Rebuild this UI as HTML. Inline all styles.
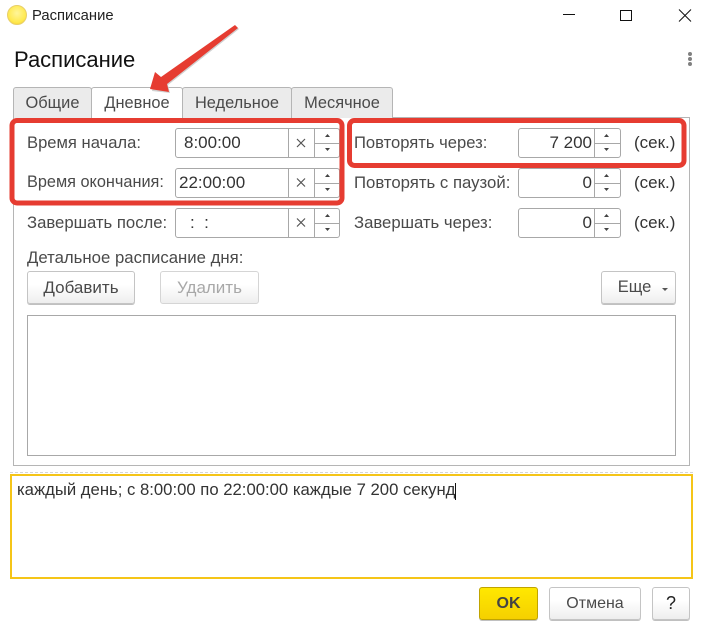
<!DOCTYPE html>
<html><head><meta charset="utf-8"><style>
html,body{margin:0;padding:0;background:#fff}
#p{position:relative;width:712px;height:632px;overflow:hidden;background:#fff;font-family:"Liberation Sans",sans-serif;color:#4a4a4a;font-size:16.6px}
#p div{position:absolute;box-sizing:border-box;white-space:nowrap}
.l{line-height:18px;height:18px}
.tab{top:87px;height:31px;background:#ebebeb;border:1px solid #b5b5b5;border-bottom:none;border-radius:3px 3px 0 0;text-align:center;line-height:31px;color:#4a4a4a;font-size:16.4px}
.f{height:30px;background:#fff;border:1px solid #a8a8a8;border-radius:3px}
.v{line-height:28px;height:28px;top:0;font-size:17px;color:#333}
.d{top:0;bottom:0;width:1px;background:#a8a8a8}
.h{height:1px;background:#a8a8a8}
.b{height:33px;border:1px solid #c4c4c4;border-radius:3px;background:linear-gradient(#fff 40%,#eeeeee);text-align:center;line-height:31px;font-size:17px;color:#4a4a4a;box-shadow:0 1px 0 #c0c0c0}
</style></head><body><div id="p">
<div style="left:7px;top:5px;width:20px;height:20px;border-radius:50%;background:radial-gradient(circle at 50% 40%,#fff59a,#ffe94d 65%,#f0c020);border:1px solid #e8cf6a"></div>
<div class="l" style="left:32px;top:7px;font-size:14.8px;color:#222">Расписание</div>
<svg style="position:absolute;left:0;top:0" width="712" height="632"><path d="M563 14.500h12M620.500 10.500h11v10h-11zM679 9.500l12 12M691 9.500l-12 12" fill="none" stroke="#111" stroke-width="1"/></svg>
<div style="left:14px;top:46px;font-size:22px;line-height:28px;color:#111">Расписание</div>
<div style="left:688px;top:52px;width:4px;height:4px;border-radius:50%;background:#808080"></div>
<div style="left:688px;top:57px;width:4px;height:4px;border-radius:50%;background:#808080"></div>
<div style="left:688px;top:62px;width:4px;height:4px;border-radius:50%;background:#808080"></div>

<div style="left:13px;top:117px;width:677px;height:349px;border:1px solid #b5b5b5"></div>
<div class="tab" style="left:13px;width:79px">Общие</div>
<div class="tab" style="left:91px;width:92px;height:32px;background:#fff;z-index:2">Дневное</div>
<div class="tab" style="left:182px;width:110px">Недельное</div>
<div class="tab" style="left:291px;width:102px">Месячное</div>

<div class="l" style="left:27px;top:134px">Время начала:</div>
<div class="l" style="left:27px;top:173px;font-size:16.3px">Время окончания:</div>
<div class="l" style="left:27px;top:214px;font-size:16.7px">Завершать после:</div>
<div class="l" style="left:354px;top:134px">Повторять через:</div>
<div class="l" style="left:354px;top:174px;font-size:16.75px">Повторять с паузой:</div>
<div class="l" style="left:354px;top:214px;font-size:16.7px">Завершать через:</div>
<div class="l" style="left:634px;top:134px;color:#333;font-size:17px">(сек.)</div>
<div class="l" style="left:634px;top:174px;color:#333;font-size:17px">(сек.)</div>
<div class="l" style="left:634px;top:214px;color:#333;font-size:17px">(сек.)</div>

<div class="f" style="left:175px;top:128px;width:165px"><div class="v" style="left:8px">8:00:00</div><div class="d" style="left:112px"></div><div class="d" style="left:138px"></div><div class="h" style="left:138px;right:0;top:14px"></div></div>
<div class="f" style="left:175px;top:168px;width:165px"><div class="v" style="left:3px">22:00:00</div><div class="d" style="left:112px"></div><div class="d" style="left:138px"></div><div class="h" style="left:138px;right:0;top:14px"></div></div>
<div class="f" style="left:175px;top:208px;width:165px"><div class="v" style="left:14px">:&nbsp;&nbsp;:</div><div class="d" style="left:112px"></div><div class="d" style="left:138px"></div><div class="h" style="left:138px;right:0;top:14px"></div></div>

<div class="f" style="left:518px;top:128px;width:103px"><div class="v" style="right:28px">7 200</div><div class="d" style="left:75px"></div><div class="h" style="left:75px;right:0;top:14px"></div></div>
<div class="f" style="left:518px;top:168px;width:103px"><div class="v" style="right:28px">0</div><div class="d" style="left:75px"></div><div class="h" style="left:75px;right:0;top:14px"></div></div>
<div class="f" style="left:518px;top:208px;width:103px"><div class="v" style="right:28px">0</div><div class="d" style="left:75px"></div><div class="h" style="left:75px;right:0;top:14px"></div></div>

<svg style="position:absolute;left:0;top:0;z-index:3" width="712" height="632">
<g fill="none" stroke="#555" stroke-width="1.200"><path d="M297 139l8 8M305 139l-8 8M297 178.500l8 8M305 178.500l-8 8M297 218.500l8 8M305 218.500l-8 8"/></g>
<g fill="#444"><path d="M325 137h5l-2.500-3zM325 148h5l-2.500 3zM325 177h5l-2.500-3zM325 188h5l-2.500 3zM325 217h5l-2.500-3zM325 228h5l-2.500 3zM604 137h5l-2.500-3zM604 148h5l-2.500 3zM604 177h5l-2.500-3zM604 188h5l-2.500 3zM604 217h5l-2.500-3zM604 228h5l-2.500 3z"/></g>
<rect x="12" y="120.500" width="330" height="82.500" rx="5" fill="none" stroke="#e63c31" stroke-width="5"/>
<rect x="349.500" y="120.500" width="334.500" height="45" rx="5" fill="none" stroke="#e63c31" stroke-width="5"/>
<path d="M151 90L155 72L161 77L235 25L238 28L167 84L169 92Z" fill="#d0d0d0" transform="translate(1 1)"/>
<path d="M150 89L155 72L161 77L235 25L238 28L167 84L169 92Z" fill="#e63c31"/>
</svg>

<div class="l" style="left:27px;top:249px;font-size:16.75px">Детальное расписание дня:</div>
<div class="b" style="left:27px;top:271px;width:108px">Добавить</div>
<div class="b" style="left:160px;top:271px;width:99px;color:#a8a8a8;border-color:#d5d5d5;box-shadow:none">Удалить</div>
<div class="b" style="left:601px;top:271px;width:75px;padding-right:8px;font-size:16.5px">Еще</div>
<div style="left:662px;top:288px;width:0;height:0;border:3px solid transparent;border-top:3px solid #555"></div>
<div style="left:27px;top:315px;width:649px;height:141px;border:1px solid #a8a8a8"></div>

<div style="left:10px;top:472px;width:683px;height:1px;border-top:1px dashed #d5d5d5"></div>
<div style="left:10px;top:474px;width:683px;height:105px;border:2px solid #f5c518"></div>
<div class="l" style="left:17px;top:481px;color:#333;font-size:16.7px">каждый день; с 8:00:00 по 22:00:00 каждые 7 200 секунд</div>
<div style="left:455px;top:483px;width:1px;height:17px;background:#111"></div>

<div class="b" style="left:479px;top:587px;width:59px;background:linear-gradient(#ffe800,#f5d000);border-color:#c0a400;font-weight:bold;color:#444;font-size:16px">OK</div>
<div class="b" style="left:549px;top:587px;width:92px;font-size:16px">Отмена</div>
<div class="b" style="left:652px;top:587px;width:38px;color:#222;font-size:18px">?</div>
</div></body></html>
